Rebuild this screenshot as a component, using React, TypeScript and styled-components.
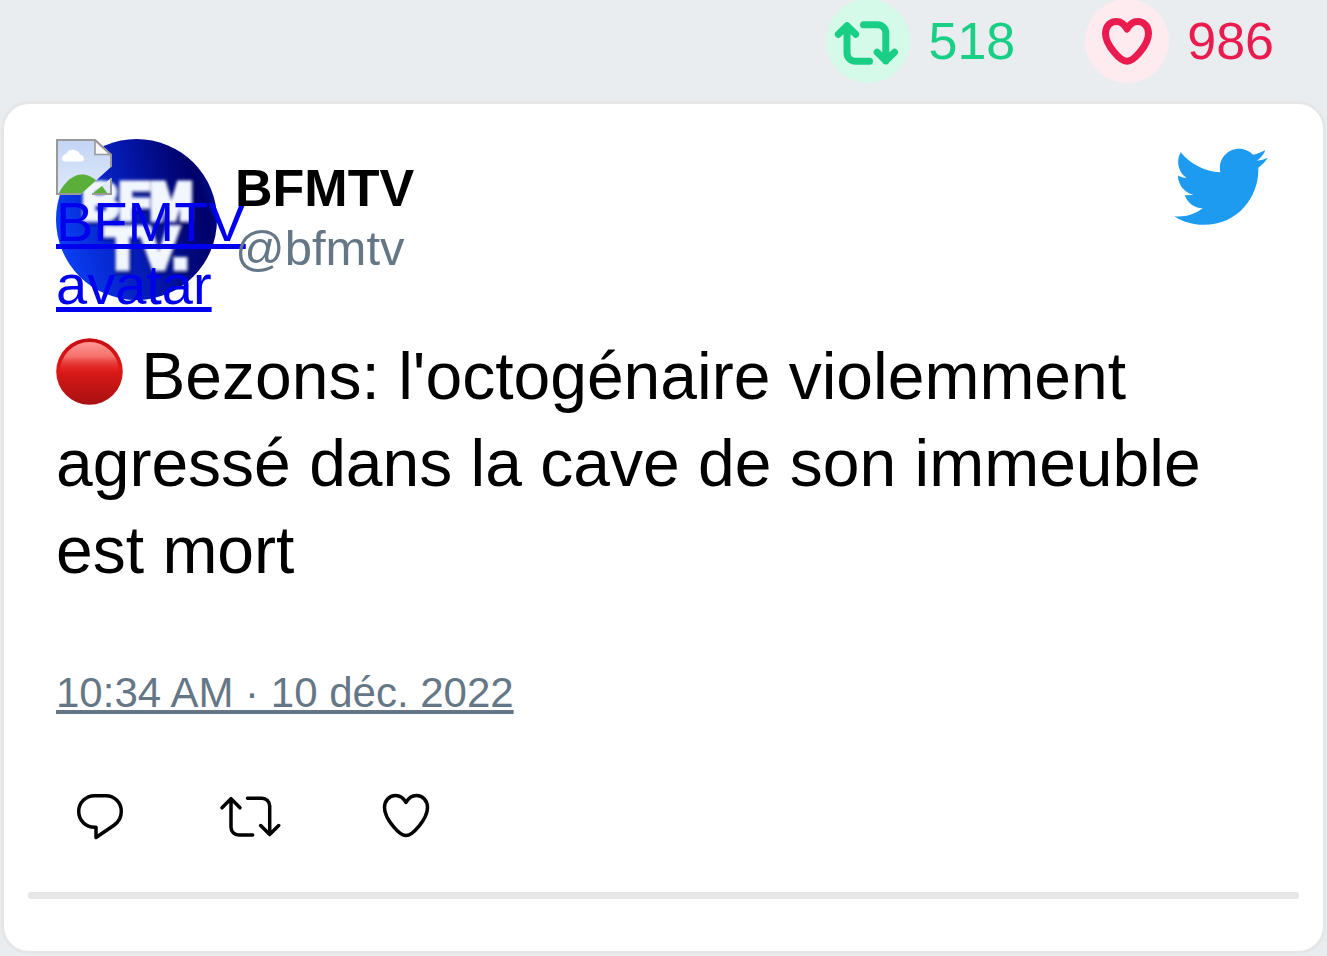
import React from "react";
import styled, { createGlobalStyle } from "styled-components";

const GlobalStyle = createGlobalStyle`
  * { box-sizing: border-box; }
  html { background: #e9edf0; }
  body {
    margin: 0;
    background: #e9edf0;
    color: #000;
    font-family: "Liberation Sans", Arial, sans-serif;
  }
`;

const Stats = styled.div`
  display: flex;
  justify-content: flex-end;
  align-items: center;
  gap: 70px;
  height: 82px;
  padding-right: 53px;
  margin-bottom: 19px;
`;

const Stat = styled.div<{ $color: string }>`
  display: flex;
  align-items: center;
  gap: 18px;
  font-size: 52px;
  line-height: 60px;
  color: ${(p) => p.$color};
`;

const StatIcon = styled.svg<{ $fill: string }>`
  width: 84px;
  height: 84px;
  border-radius: 50%;
  background: ${(p) => p.$fill};
  fill: none;
  stroke: currentColor;
  stroke-width: 7;
  stroke-linecap: round;
  stroke-linejoin: round;
`;

const Card = styled.article`
  margin: 0 1px;
  padding: 35px 24px 52px;
  border: 3px solid #e6e6e6;
  border-radius: 28px;
  background: #fff;
`;

const Content = styled.div`
  padding: 0 28px;
`;

const Header = styled.header`
  display: flex;
  align-items: flex-start;
  margin-bottom: 33px;
`;

const Avatar = styled.div`
  position: relative;
  flex: none;
  width: 161px;
  height: 161px;
  margin-right: 18px;
`;

const AvatarPicture = styled.svg`
  display: block;
  width: 161px;
  height: 161px;
  border-radius: 50%;
`;

const AvatarLink = styled.a`
  position: absolute;
  top: 0;
  left: 0;
  width: 161px;
  color: #0000ee;
  font-size: 56px;
  line-height: 63px;
`;

const MissingImage = styled.svg`
  display: block;
  width: 56px;
  height: 56px;
  margin-bottom: -5px;
`;

const Author = styled.div`
  position: relative;
  flex: 1;
  padding-top: 19px;
`;

const Name = styled.div`
  font-size: 52px;
  line-height: 60px;
  font-weight: 700;
`;

const Handle = styled.div`
  font-size: 49px;
  line-height: 60px;
  color: #657786;
`;

const Bird = styled.svg`
  flex: none;
  width: 99px;
  height: 99px;
  fill: #1d9bf0;
`;

const Message = styled.p`
  margin: 0 0 71px;
  font-size: 66px;
  line-height: 87px;
`;

const RedCircle = styled.svg`
  width: 67px;
  height: 67px;
  vertical-align: -6px;
`;

const DateLink = styled.a`
  display: block;
  width: fit-content;
  font-size: 42px;
  line-height: 56px;
  color: #657786;
`;

const Actions = styled.div`
  display: flex;
  gap: 65px;
  margin: 60px 0 41px;
`;

const ActionButton = styled.button`
  width: 88px;
  height: 70px;
  padding: 0;
  border: 0;
  background: none;
  color: #000;
  cursor: pointer;
`;

const ActionIcon = styled.svg`
  display: block;
  width: 88px;
  height: 70px;
  fill: none;
  stroke: currentColor;
  stroke-width: 3.5;
  stroke-linecap: round;
  stroke-linejoin: round;
`;

const Divider = styled.hr`
  height: 7px;
  margin: 0;
  border: 0;
  border-radius: 3px;
  background: #e6e6e6;
`;

export default function App() {
  return (
    <>
      <GlobalStyle />
      <Stats>
        <Stat $color="#19cf86">
          <StatIcon $fill="#d5faea" viewBox="0 0 84 84" role="img" aria-label="Retweets">
            <path d="M12.3 35.3 21 26.7l8.7 8.6M21 26.7V54a8.3 8.3 0 0 0 8.3 8.3h14.2" />
            <path d="M37.5 25.7h14a8.3 8.3 0 0 1 8.3 8.3v28M51.1 53.3l8.7 8.5 8.7-8.5" />
          </StatIcon>
          <span>518</span>
        </Stat>
        <Stat $color="#ea1c4f">
          <StatIcon $fill="#fdebf0" viewBox="0 0 84 84" role="img" aria-label="J'aime">
            <path d="M42 30C39.5 25 35.5 22.4 31.3 22.4c-6.3 0-10.8 5.2-10.8 12C20.5 46 35.5 62.3 42 62.3S63.5 46 63.5 34.4c0-6.8-4.5-12-10.8-12C48.5 22.4 44.5 25 42 30z" />
          </StatIcon>
          <span>986</span>
        </Stat>
      </Stats>

      <Card>
        <Content>
          <Header>
            <Avatar>
              <AvatarPicture viewBox="0 0 161 161" aria-hidden="true">
                <defs>
                  <linearGradient id="sky" x1="0" y1="0.65" x2="1" y2="0.4">
                    <stop offset="0" stopColor="#0a42f8" />
                    <stop offset="0.3" stopColor="#0628d0" />
                    <stop offset="0.55" stopColor="#0416a8" />
                    <stop offset="0.8" stopColor="#010678" />
                    <stop offset="0.92" stopColor="#00006a" />
                    <stop offset="1" stopColor="#020c88" />
                  </linearGradient>
                  <filter id="soft" x="-10%" y="-10%" width="120%" height="120%">
                    <feGaussianBlur stdDeviation="1.6" />
                  </filter>
                </defs>
                <rect width="161" height="161" fill="url(#sky)" />
                <g
                  filter="url(#soft)"
                  fontFamily="Liberation Sans, Arial, sans-serif"
                  fontWeight="700"
                  fontSize="51"
                >
                  <g fill="#000a60" stroke="#000a60" strokeWidth="9" opacity="0.5">
                    <text x="27" y="82">BFM</text>
                    <text x="50" y="131" fontSize="57">TV.</text>
                  </g>
                  <g fill="#f2f6ff" stroke="#f2f6ff" strokeWidth="5">
                    <text x="26" y="80">BFM</text>
                    <text x="49" y="129" fontSize="57">TV.</text>
                  </g>
                </g>
              </AvatarPicture>
              <AvatarLink href="#bfmtv">
                <MissingImage viewBox="0 0 56 56" aria-hidden="true">
                  <defs>
                    <linearGradient id="paper" x1="0" y1="0" x2="0" y2="1">
                      <stop offset="0" stopColor="#c3d5f5" />
                      <stop offset="1" stopColor="#dfe9fb" />
                    </linearGradient>
                    <clipPath id="sheet">
                      <path d="M1 1H39L55 16v12L25 55H1z" />
                    </clipPath>
                  </defs>
                  <path d="M1 1H39L55 16.5V28L25 55H1z" fill="url(#paper)" />
                  <g clipPath="url(#sheet)">
                    <path d="M9 22.5c-4.500 0-4-6.500 1-7.500C12 9 22 9.500 24 15.500c4.500.5 5.500 7 1.500 7z" fill="#fff" />
                    <path d="M2 56C8 43 17 35.500 26 35.500c6 0 10 2.500 15 6.500L24 58z" fill="#5aae3a" />
                  </g>
                  <path d="M55 39v16H36z" fill="#dfe9fb" />
                  <path d="M36 55l10-8 6 8z" fill="#5aae3a" />
                  <path d="M39 1v14.500h16z" fill="#f8f8f8" stroke="#999" strokeWidth="1.600" />
                  <path d="M25 55H1V1h38l16 15v12M55 39v16H36" fill="none" stroke="#999" strokeWidth="2" />
                </MissingImage>
                BFMTV avatar
              </AvatarLink>
            </Avatar>
            <Author>
              <Name>BFMTV</Name>
              <Handle>@bfmtv</Handle>
            </Author>
            <Bird viewBox="0.4 0.4 24 24" role="img" aria-label="Twitter">
              <path d="M23.643 4.937c-.835.37-1.732.62-2.675.733.962-.576 1.7-1.49 2.048-2.578-.9.534-1.897.922-2.958 1.13-.85-.904-2.06-1.47-3.4-1.47-2.572 0-4.658 2.086-4.658 4.66 0 .364.042.718.12 1.06-3.873-.195-7.304-2.05-9.602-4.868-.4.69-.63 1.49-.63 2.342 0 1.616.823 3.043 2.072 3.878-.764-.025-1.482-.234-2.11-.583v.06c0 2.257 1.605 4.14 3.737 4.568-.392.106-.803.162-1.227.162-.3 0-.593-.028-.877-.082.593 1.85 2.313 3.198 4.352 3.234-1.595 1.25-3.604 1.995-5.786 1.995-.376 0-.747-.022-1.112-.065 2.062 1.323 4.51 2.093 7.14 2.093 8.57 0 13.255-7.098 13.255-13.254 0-.2-.005-.402-.014-.602.91-.658 1.7-1.477 2.323-2.41z" />
            </Bird>
          </Header>

          <Message>
            <RedCircle viewBox="0 0 67 67" role="img" aria-label="Cercle rouge">
              <defs>
                <linearGradient id="ball" x1="0" y1="0" x2="0" y2="1">
                  <stop offset="0" stopColor="#c40d10" />
                  <stop offset="0.45" stopColor="#df1a18" />
                  <stop offset="1" stopColor="#a81012" />
                </linearGradient>
                <linearGradient id="shine" x1="0" y1="0" x2="0" y2="1">
                  <stop offset="0" stopColor="#ff9a96" />
                  <stop offset="0.25" stopColor="#f56f6b" />
                  <stop offset="0.55" stopColor="#df1a18" stopOpacity="0" />
                </linearGradient>
              </defs>
              <circle cx="33.5" cy="33.5" r="33.3" fill="url(#ball)" />
              <ellipse cx="33.500" cy="33.500" rx="29.500" ry="29.500" fill="url(#shine)" />
            </RedCircle>{" "}
            Bezons: l'octogénaire violemment agressé dans la cave de son immeuble est mort
          </Message>

          <DateLink href="#status">10:34 AM · 10 déc. 2022</DateLink>

          <Actions>
            <ActionButton type="button" aria-label="Répondre">
              <ActionIcon viewBox="0 0 88 70">
                <path d="M40 46.3h-1.5a15.8 15.8 0 0 1 0-31.6H50c8.5 0 15.3 7 15.3 15.8 0 5.800-2.800 10.500-7.300 13.700L40 56.500z" />
              </ActionIcon>
            </ActionButton>
            <ActionButton type="button" aria-label="Retweeter">
              <ActionIcon viewBox="0 0 88 70">
                <path d="M13 26.8l9-9.1 9 9.1M22 18v28.3a7.7 7.7 0 0 0 7.7 7.7h14" />
                <path d="M38.5 17.3H53a7.7 7.7 0 0 1 7.7 7.7v28.5M51.7 44.6l9 9 9-9" />
              </ActionIcon>
            </ActionButton>
            <ActionButton type="button" aria-label="J'aime">
              <ActionIcon viewBox="0 0 88 70">
                <path d="M44 21.5C41.5 16.8 37.7 14.5 33.5 14.5c-6.3 0-11 5.2-11 12C22.5 38 37.5 54.5 44 54.5S65.5 38 65.5 26.5c0-6.8-4.7-12-11-12C50.3 14.5 46.5 16.8 44 21.5z" />
              </ActionIcon>
            </ActionButton>
          </Actions>
        </Content>
        <Divider />
      </Card>
    </>
  );
}
